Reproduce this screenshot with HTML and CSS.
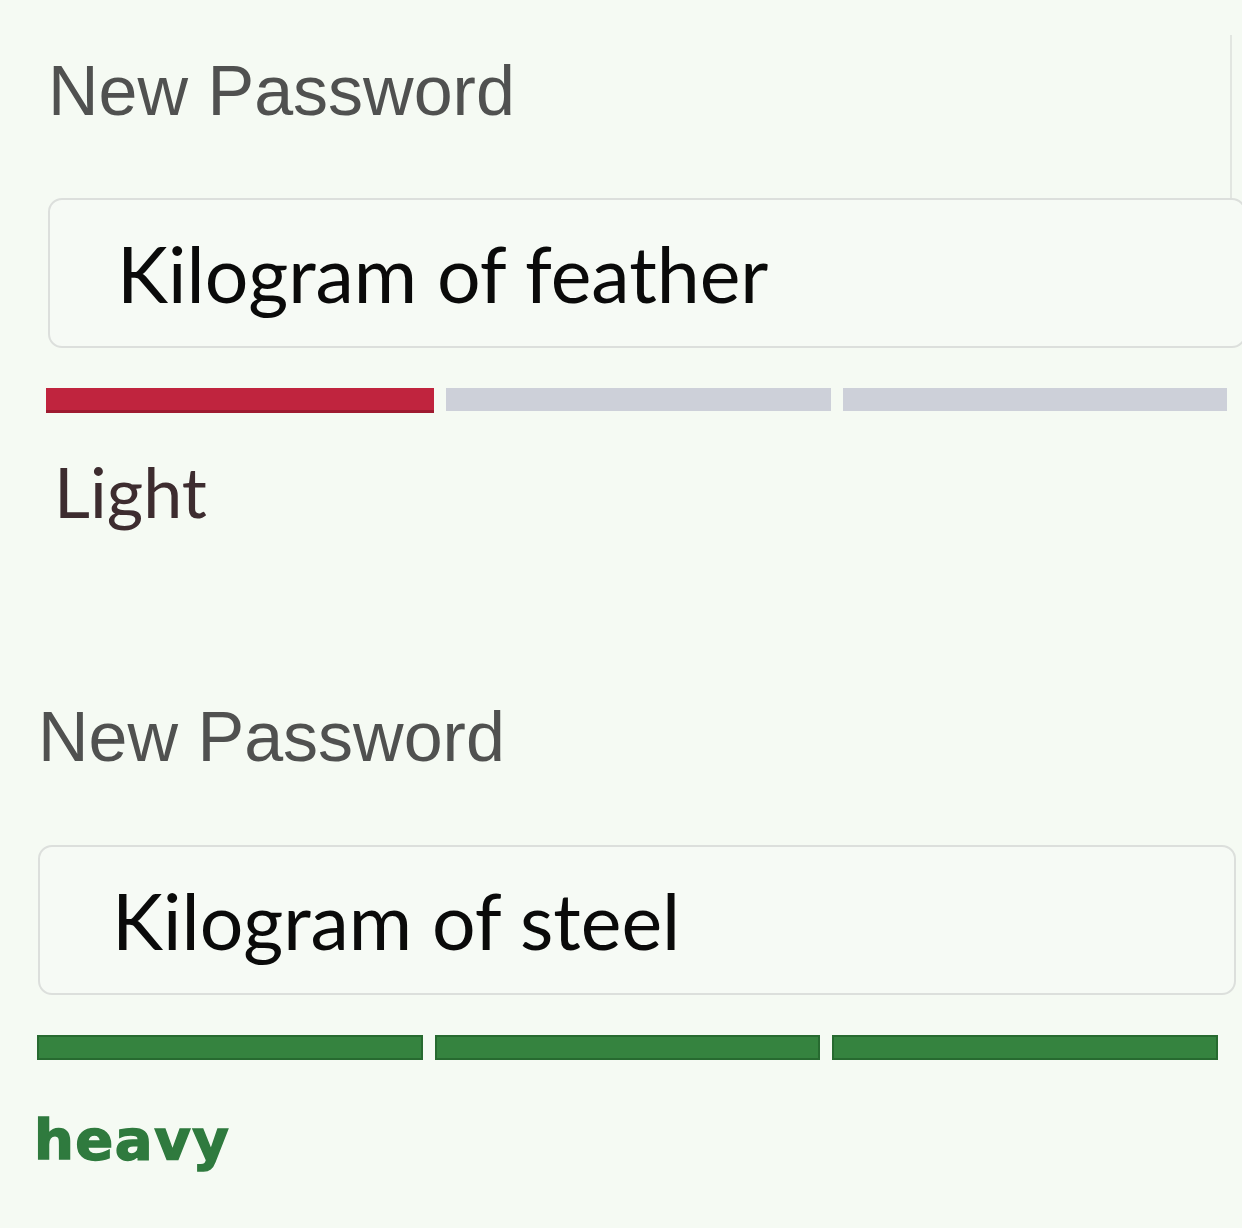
FILE: index.html
```html
<!DOCTYPE html>
<html lang="en">
<head>
<meta charset="utf-8">
<title>Password strength</title>
<link rel="stylesheet" href="styles.css">
</head>
<body>
<main class="page">
  <section class="field field-light">
    <div class="field-head">
      <label class="label">New Password</label>
    </div>
    <div class="input"><span class="input-text">Kilogram of feather</span></div>
    <div class="meter">
      <span class="seg seg-red"></span>
      <span class="seg seg-gray"></span>
      <span class="seg seg-gray"></span>
    </div>
    <div class="status status-light">Light</div>
  </section>

  <section class="field field-heavy">
    <div class="field-head">
      <label class="label">New Password</label>
    </div>
    <div class="input"><span class="input-text">Kilogram of steel</span></div>
    <div class="meter">
      <span class="seg seg-green"></span>
      <span class="seg seg-green"></span>
      <span class="seg seg-green"></span>
    </div>
    <div class="status status-heavy">heavy</div>
  </section>
</main>
</body>
</html>
```

FILE: styles.css
```css
html, body {
  margin: 0;
  padding: 0;
  background: #f5faf3;
}

.page {
  width: 1242px;
  height: 1228px;
  overflow: hidden;
  display: flex;
  flex-direction: column;
}

.field {
  display: flex;
  flex-direction: column;
}

.field-light {
  padding-left: 48px;
}

.field-heavy {
  padding-left: 38px;
  margin-top: 177px;
}

.field-head {
  box-sizing: border-box;
  height: 163px;
  padding-top: 22px;
  margin-top: 35px;
  margin-right: 10px;
  border-right: 2px solid #e2e6e1;
}

.field-heavy .field-head {
  height: auto;
  padding-top: 0;
  margin-top: 0;
  margin-right: 0;
  border-right: none;
}

.label {
  display: block;
  font-family: "Liberation Sans", Arial, sans-serif;
  font-size: 70px;
  line-height: 69px;
  color: #505150;
  letter-spacing: 0;
}

.input {
  box-sizing: border-box;
  height: 150px;
  border: 2px solid #dcdfdc;
  border-radius: 14px;
  background: #f6faf5;
  display: flex;
  align-items: center;
  padding-left: 67px;
}

.field-light .input {
  margin-right: -4px;
}

.field-heavy .input {
  margin-top: 73px;
  margin-right: 6px;
  padding-left: 72px;
}

.input-text {
  font-family: Lato, "Open Sans", sans-serif;
  font-size: 77px;
  line-height: 1;
  color: #0a0a0a;
}

.meter {
  display: flex;
  gap: 12px;
  height: 25px;
  margin-top: 40px;
}

.field-light .meter {
  margin-left: -2px;
  margin-right: 15px;
}

.field-heavy .meter {
  margin-left: -1px;
  margin-right: 24px;
}

.seg {
  flex: 1;
  display: block;
}

.seg-red {
  flex: 1.01;
  background: #c0243e;
  box-shadow: inset 0 -3px 0 #9e1a30;
}

.seg-gray {
  background: #cdd0d9;
  height: 23px;
}

.seg-green {
  background: #35833f;
  box-shadow: inset 0 0 0 2px #276a30;
}

.status {
  line-height: 1;
}

.status-light {
  margin-top: 43px;
  margin-left: 6px;
  font-family: Lato, sans-serif;
  font-size: 70px;
  color: #3d2c2f;
}

.status-heavy {
  margin-top: 52px;
  margin-left: -4px;
  font-family: "DejaVu Sans", Verdana, sans-serif;
  font-weight: bold;
  font-size: 56px;
  letter-spacing: 1.5px;
  color: #2f7a3e;
  -webkit-text-stroke: 1.5px #2f7a3e;
}
```
